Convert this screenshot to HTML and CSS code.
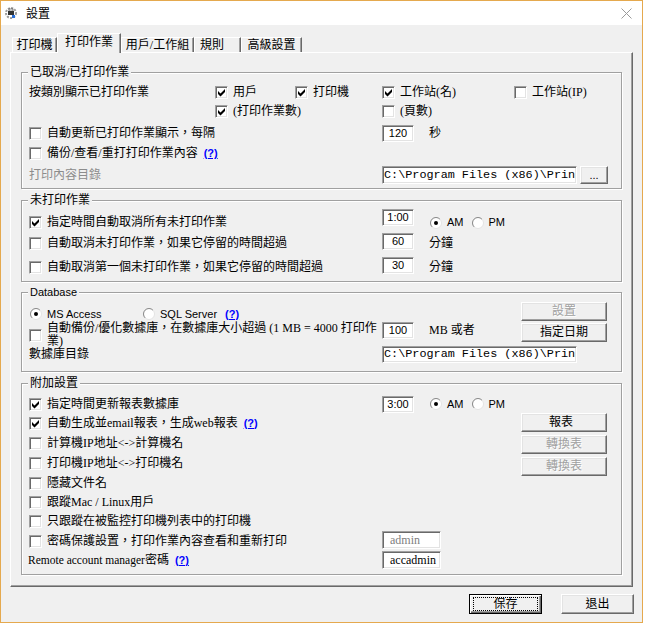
FILE: index.html
```html
<!DOCTYPE html>
<html>
<head>
<meta charset="utf-8">
<title>設置</title>
<link rel="stylesheet" href="styles.css">
</head>
<body>
<div class="window">
  <div class="titlebar">
    <svg class="appicon" width="14" height="14" viewBox="0 0 14 14">
      <circle cx="7" cy="7" r="5" fill="none" stroke="#9a9a9a" stroke-width="2" stroke-dasharray="2 1.3"/>
      <rect x="4" y="5" width="6" height="4" fill="#333"/>
      <rect x="5" y="3" width="4" height="2" fill="#fff" stroke="#333" stroke-width="0.6"/>
      <rect x="8" y="9" width="3" height="3" fill="#2b6fd6"/>
    </svg>
    <span class="title">設置</span>
    <svg class="close" width="11" height="11" viewBox="0 0 11 11"><path d="M0.5 0.5L10.5 10.5M10.5 0.5L0.5 10.5" stroke="#9a9a9a" stroke-width="1" fill="none"/></svg>
  </div>
  <div class="client">
    <div class="tabs">
      <div class="tab t1">打印機</div>
      <div class="tab sel t2">打印作業</div>
      <div class="tab t3">用戶/工作組</div>
      <div class="tab t4">規則</div>
      <div class="tab t5">高級設置</div>
    </div>
    <div class="panel">

      <div class="group g1">
        <div class="legend">已取消/已打印作業</div>
        <div class="cell">按類別顯示已打印作業</div>
        <label class="cell chk"><span class="cb"><svg width="11" height="11" viewBox="0 0 11 11"><path d="M2 4L4.5 6.5L9 2V5L4.5 9.5L2 7Z"/></svg></span><span>用戶</span></label>
        <label class="cell chk"><span class="cb"><svg width="11" height="11" viewBox="0 0 11 11"><path d="M2 4L4.5 6.5L9 2V5L4.5 9.5L2 7Z"/></svg></span><span>打印機</span></label>
        <label class="cell chk"><span class="cb"><svg width="11" height="11" viewBox="0 0 11 11"><path d="M2 4L4.5 6.5L9 2V5L4.5 9.5L2 7Z"/></svg></span><span>工作站(名)</span></label>
        <label class="cell chk"><span class="cb"></span><span>工作站(IP)</span></label>

        <label class="cell chk col2"><span class="cb"><svg width="11" height="11" viewBox="0 0 11 11"><path d="M2 4L4.5 6.5L9 2V5L4.5 9.5L2 7Z"/></svg></span><span>(打印作業數)</span></label>
        <label class="cell chk col4"><span class="cb"></span><span>(頁數)</span></label>

        <label class="cell chk span13"><span class="cb"></span><span>自動更新已打印作業顯示，每隔</span></label>
        <div class="cell span46"><span class="tb num">120</span><span class="unit">秒</span></div>

        <label class="cell chk full"><span class="cb"></span><span>備份/查看/重打打印作業內容<a class="help">(?)</a></span></label>

        <div class="cell r5 span13 gray">打印內容目錄</div>
        <div class="cell r5 span46"><span class="tb path h18">C:\Program Files (x86)\Prin</span><span class="btn small">...</span></div>
      </div>

      <div class="group g2">
        <div class="legend">未打印作業</div>
        <label class="cell chk"><span class="cb"><svg width="11" height="11" viewBox="0 0 11 11"><path d="M2 4L4.5 6.5L9 2V5L4.5 9.5L2 7Z"/></svg></span><span>指定時間自動取消所有未打印作業</span></label>
        <div class="cell"><span class="tb num up5">1:00</span>
          <span class="rad first"><svg width="12" height="12" viewBox="0 0 12 12"><circle cx="6" cy="6" r="5.5" fill="#fff" stroke="#e3e3e3"/><path d="M2.1 9.9A5.5 5.5 0 0 1 9.9 2.1" fill="none" stroke="#8a8a8a"/><circle cx="6" cy="6" r="2" fill="#000"/></svg><span class="ss">AM</span></span>
          <span class="rad"><svg width="12" height="12" viewBox="0 0 12 12"><circle cx="6" cy="6" r="5.5" fill="#fff" stroke="#e3e3e3"/><path d="M2.1 9.9A5.5 5.5 0 0 1 9.9 2.1" fill="none" stroke="#8a8a8a"/></svg><span class="ss">PM</span></span>
        </div>
        <label class="cell chk"><span class="cb"></span><span>自動取消未打印作業，如果它停留的時間超過</span></label>
        <div class="cell"><span class="tb num up2">60</span><span class="unit">分鐘</span></div>
        <label class="cell chk"><span class="cb"></span><span>自動取消第一個未打印作業，如果它停留的時間超過</span></label>
        <div class="cell"><span class="tb num up2">30</span><span class="unit">分鐘</span></div>
      </div>

      <div class="group g3">
        <div class="legend ss">Database</div>
        <div class="cell radrow">
          <span class="rad ms"><svg width="12" height="12" viewBox="0 0 12 12"><circle cx="6" cy="6" r="5.5" fill="#fff" stroke="#e3e3e3"/><path d="M2.1 9.9A5.5 5.5 0 0 1 9.9 2.1" fill="none" stroke="#8a8a8a"/><circle cx="6" cy="6" r="2" fill="#000"/></svg><span class="ss">MS Access</span></span>
          <span class="rad"><svg width="12" height="12" viewBox="0 0 12 12"><circle cx="6" cy="6" r="5.5" fill="#fff" stroke="#e3e3e3"/><path d="M2.1 9.9A5.5 5.5 0 0 1 9.9 2.1" fill="none" stroke="#8a8a8a"/></svg><span class="ss">SQL Server</span></span>
          <a class="help nomargin">(?)</a>
        </div>
        <div class="cell col3 btncell"><span class="btn dis">設置</span></div>

        <label class="cell chk two"><span class="cb"></span><span class="wrap">自動備份/優化數據庫，在數據庫大小超過 (1 MB = 4000 打印作<br>業)</span></label>
        <div class="cell"><span class="tb num">100</span><span class="unit">MB 或者</span></div>
        <div class="cell col3 btncell"><span class="btn down1">指定日期</span></div>

        <div class="cell">數據庫目錄</div>
        <div class="cell span24"><span class="tb path">C:\Program Files (x86)\Prin</span></div>
      </div>

      <div class="group g4">
        <div class="legend">附加設置</div>
        <label class="cell chk"><span class="cb"><svg width="11" height="11" viewBox="0 0 11 11"><path d="M2 4L4.5 6.5L9 2V5L4.5 9.5L2 7Z"/></svg></span><span>指定時間更新報表數據庫</span></label>
        <div class="cell"><span class="tb num">3:00</span>
          <span class="rad first"><svg width="12" height="12" viewBox="0 0 12 12"><circle cx="6" cy="6" r="5.5" fill="#fff" stroke="#e3e3e3"/><path d="M2.1 9.9A5.5 5.5 0 0 1 9.9 2.1" fill="none" stroke="#8a8a8a"/><circle cx="6" cy="6" r="2" fill="#000"/></svg><span class="ss">AM</span></span>
          <span class="rad"><svg width="12" height="12" viewBox="0 0 12 12"><circle cx="6" cy="6" r="5.5" fill="#fff" stroke="#e3e3e3"/><path d="M2.1 9.9A5.5 5.5 0 0 1 9.9 2.1" fill="none" stroke="#8a8a8a"/></svg><span class="ss">PM</span></span>
        </div>
        <div class="btncol">
          <span class="btn report">報表</span>
          <span class="btn dis">轉換表</span>
          <span class="btn dis">轉換表</span>
        </div>

        <label class="cell chk r2"><span class="cb"><svg width="11" height="11" viewBox="0 0 11 11"><path d="M2 4L4.5 6.5L9 2V5L4.5 9.5L2 7Z"/></svg></span><span>自動生成並email報表，生成web報表<a class="help">(?)</a></span></label>
        <label class="cell chk r3"><span class="cb"></span><span>計算機IP地址&lt;-&gt;計算機名</span></label>
        <label class="cell chk r4"><span class="cb"></span><span>打印機IP地址&lt;-&gt;打印機名</span></label>
        <label class="cell chk r5"><span class="cb"></span><span>隱藏文件名</span></label>
        <label class="cell chk r6"><span class="cb"></span><span>跟蹤Mac / Linux用戶</span></label>
        <label class="cell chk r7"><span class="cb"></span><span>只跟蹤在被監控打印機列表中的打印機</span></label>
        <label class="cell chk r8"><span class="cb"></span><span>密碼保護設置，打印作業內容查看和重新打印</span></label>
        <div class="cell r8 col2 top"><span class="tb pw dim">admin</span></div>
        <div class="cell r9 remote"><span><span class="lat">Remote account manager</span>密碼<a class="help">(?)</a></span></div>
        <div class="cell r9 col2 top"><span class="tb pw">accadmin</span></div>
      </div>

    </div>
    <div class="footer">
      <span class="btn fbtn def"><span class="focus">保存</span></span>
      <span class="btn fbtn">退出</span>
    </div>
  </div>
</div>
</body>
</html>
```

FILE: styles.css
```css
* { box-sizing: border-box; }
html, body { margin: 0; padding: 0; background: #fff; }
body {
  font-family: "Liberation Serif", "Noto Sans CJK TC", serif;
  font-size: 12px;
  line-height: 13px;
  color: #000;
}
.window {
  width: 643px;
  height: 623px;
  border: 1px solid #e5a94e;
  background: #f0f0f0;
  display: flex;
  flex-direction: column;
}
.titlebar {
  height: 24px;
  flex: none;
  background: #fff;
  display: flex;
  align-items: center;
  padding: 0 10px 0 3px;
}
.appicon { flex: none; margin-top: -1px; }
.title {
  margin-left: 8px;
  font-family: "Noto Sans CJK TC", sans-serif;
  font-size: 12px;
  line-height: 14px;
}
.close { margin-left: auto; }

.client {
  flex: 1;
  padding: 8px 9px 0 9px;
  display: flex;
  flex-direction: column;
}
.tabs {
  display: flex;
  align-items: flex-end;
  height: 20px;
  padding-left: 2px;
  position: relative;
  z-index: 1;
}
.tab {
  height: 15px;
  margin-bottom: 1px;
  border-top: 1px solid #fff;
  border-left: 1px solid #fff;
  border-right: 1px solid #696969;
  box-shadow: inset -1px 0 #a0a0a0;
  display: flex;
  align-items: center;
  justify-content: center;
  white-space: nowrap;
  background: #f0f0f0;
}
.tab.sel {
  height: 20px;
  margin-bottom: 0;
  align-items: flex-start;
  padding-top: 2px;
}
.t1 { width: 45px; }
.t2 { width: 64px; }
.t3 { width: 73px; }
.t4 { width: 47px; justify-content: flex-start; padding-left: 5px; }
.t5 { width: 61px; }

.panel {
  flex: none;
  height: 535px;
  margin-top: -1px;
  border: 1px solid;
  border-color: #fff #696969 #696969 #fff;
  box-shadow: inset -1px -1px #a0a0a0;
  padding: 19px 10px 0 10px;
  display: flex;
  flex-direction: column;
}

.group {
  position: relative;
  flex: none;
  border: 1px solid #a0a0a0;
  box-shadow: 1px 1px 0 #fff, inset 1px 1px 0 #fff;
  display: grid;
  align-items: start;
  padding-left: 7px;
}
.legend {
  position: absolute;
  top: -7px;
  left: 6px;
  padding: 0 2px;
  background: #f0f0f0;
  line-height: 13px;
  white-space: nowrap;
}
.g1 {
  height: 117px;
  padding-top: 11px;
  grid-template-columns: 186px 80px 87px 132px 1fr;
  grid-template-rows: 19px 22px 20px 21px 18px;
}
.g2 {
  height: 82px;
  margin-top: 11px;
  padding-top: 13px;
  grid-template-columns: 353px 1fr;
  grid-template-rows: 21px 24px 17px;
}
.g3 {
  height: 80px;
  margin-top: 10px;
  padding-top: 9px;
  grid-template-columns: 353px 139px 86px;
  grid-template-rows: 20px 24px 17px;
}
.g4 {
  height: 192px;
  margin-top: 11px;
  padding-top: 11px;
  grid-template-columns: 353px 139px 86px;
  grid-template-rows: 18px 20px 20px 20px 20px 19px 19px 20px 19px;
  align-items: stretch;
}

.cell {
  height: 17px;
  display: flex;
  align-items: center;
  white-space: nowrap;
  min-width: 0;
}
.g4 .cell { height: auto; }
.g1 .r5 { height: 18px; }
.col2 { grid-column: 2; }
.col3 { grid-column: 3; }
.col4 { grid-column: 4; }
.span13 { grid-column: 1 / 4; }
.span46 { grid-column: 4 / 6; }
.span24 { grid-column: 2 / 4; }
.full { grid-column: 1 / -1; }
.g4 .r2 { grid-row: 2; grid-column: 1; }
.g4 .r3 { grid-row: 3; grid-column: 1; }
.g4 .r4 { grid-row: 4; grid-column: 1; }
.g4 .r5 { grid-row: 5; grid-column: 1; }
.g4 .r6 { grid-row: 6; grid-column: 1; }
.g4 .r7 { grid-row: 7; grid-column: 1; }
.g4 .r8 { grid-row: 8; }
.g4 .r9 { grid-row: 9; }
.g4 .top { align-items: flex-start; }
.remote { margin-left: -1px; }

.chk { gap: 5px; }
.cb {
  flex: none;
  display: block;
  width: 13px;
  height: 13px;
  background: #fff;
  border: 1px solid;
  border-color: #a0a0a0 #fff #fff #a0a0a0;
  box-shadow: inset 1px 1px #696969, inset -1px -1px #e3e3e3;
}
.cb svg { display: block; }
.cb path { fill: #000; }

.tb {
  flex: none;
  height: 17px;
  background: #fff;
  border: 1px solid;
  border-color: #a0a0a0 #fff #fff #a0a0a0;
  box-shadow: inset 1px 1px #696969, inset -1px -1px #e3e3e3;
  display: flex;
  align-items: center;
  overflow: hidden;
  white-space: nowrap;
}
.num {
  width: 32px;
  justify-content: center;
  font-family: "Liberation Sans", sans-serif;
  font-size: 11px;
}
.up5 { align-self: flex-start; margin-top: -5px; }
.up2 { align-self: flex-start; margin-top: -2px; }
.g1 .num, .g3 .num { align-self: flex-start; }
.path {
  width: 195px;
  padding-left: 1px;
  font-family: "Liberation Mono", monospace;
  font-size: 11.8px;
}
.h18 { height: 18px; }
.pw {
  width: 59px;
  height: 18px;
  padding-left: 7px;
}
.dim { color: #808080; }
.unit { margin-left: 15px; }
.gray { color: #8c8c8c; }

.rad { display: flex; align-items: center; gap: 5px; margin-right: 8px; }
.rad svg { flex: none; display: block; }
.rad.first { margin-left: 16px; }
.rad.ms { width: 113px; margin-right: 0; margin-left: 1px; }
.radrow { grid-column: 1 / 3; height: 20px; padding-top: 4px; }

.ss { font-family: "Liberation Sans", sans-serif; font-size: 11px; }
.lat { font-size: 11.5px; }
.help {
  color: #0000ff;
  text-decoration: underline;
  font-family: "Liberation Sans", sans-serif;
  font-weight: bold;
  font-size: 11px;
  margin-left: 6px;
}
.help.nomargin { margin-left: 0; }

.two { height: 26px; align-items: center; }
.wrap { line-height: 13px; }

.btn {
  flex: none;
  width: 86px;
  height: 19px;
  background: #f0f0f0;
  border: 1px solid;
  border-color: #fff #696969 #696969 #fff;
  box-shadow: inset -1px -1px #a0a0a0, inset 1px 1px #e3e3e3;
  display: flex;
  align-items: center;
  justify-content: center;
  white-space: nowrap;
}
.btn.dis { color: #a0a0a0; text-shadow: 1px 1px 0 #fff; }
.btn.small {
  width: 28px;
  height: 18px;
  margin-left: 3px;
  font-family: "Liberation Sans", sans-serif;
  font-size: 11px;
}
.btn.report { padding-right: 6px; }
.btncell { height: 20px; align-items: flex-start; }
.down1 { margin-top: 1px; }
.btncol {
  grid-column: 3;
  grid-row: 2 / 6;
  display: flex;
  flex-direction: column;
  gap: 3px;
  align-self: start;
}

.footer {
  display: flex;
  justify-content: flex-end;
  gap: 19px;
  margin-top: 7px;
  margin-right: -1px;
}
.fbtn { width: 73px; height: 20px; }
.def {
  border-color: #000;
  box-shadow: inset 1px 1px #fff, inset -1px -1px #696969, inset -2px -2px #a0a0a0;
  padding: 2px 3px;
}
.focus {
  flex: 1;
  align-self: stretch;
  border: 1px dotted #000;
  display: flex;
  align-items: center;
  justify-content: center;
}
```
